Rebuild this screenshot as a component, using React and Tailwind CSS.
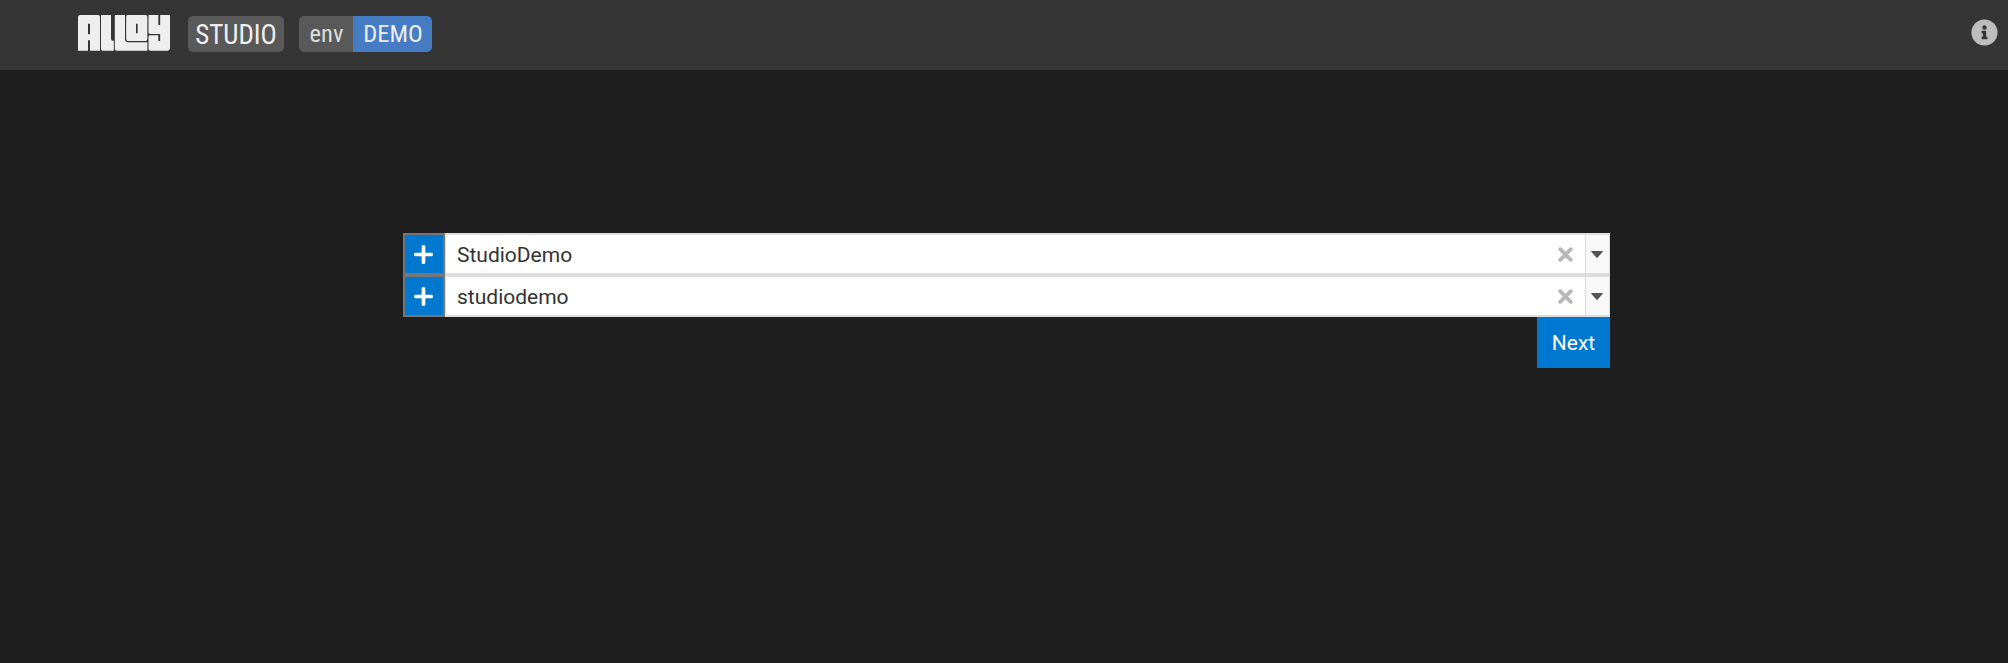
import React from "react";

function Logo() {
  return (
    <svg className="block h-9 w-[92px]" viewBox="54 45 276 108" role="img" aria-label="Alloy">
      <g fill="#eeeeee">
        <path fillRule="evenodd" d="M61 45H114Q120 45 120 51V152H90V121H84V152H54V53Q54 45 61 45ZM84 71V103H90V71Z" />
        <path d="M123 45H153V116Q153 122 158 122H161.5V152H128Q123 152 123 147Z" />
        <path d="M164.500 45H195V118Q195.500 127 204 127H262V152H170Q164.500 152 164.500 147Z" />
        <path fillRule="evenodd" d="M203 45H257Q262 45 262 50V117Q262 123 256 123H204Q198.500 123 198.500 117V50Q198.500 45 203 45ZM228 71V100H233V71Z" />
        <path d="M265.500 45H295V75H300.500V45H330V145Q330 152 323 152H271Q265.500 152 265.500 147V111Q265.500 106 270 106H295V123H300.500V102H270Q265.500 102 265.500 97Z" />
      </g>
    </svg>
  );
}

function Condensed({ children, className }) {
  return (
    <span className={`font-['Roboto_Condensed','Roboto',sans-serif] [font-stretch:75%] whitespace-nowrap ${className}`}>
      {children}
    </span>
  );
}

function SelectRow({ value }) {
  return (
    <div className="flex h-[42px]">
      <button className="flex w-[42px] items-center justify-center border-2 border-[#767676] bg-[#0078d0] pr-px" aria-label="Add">
        <svg className="size-[19px]" viewBox="0 0 19 19" fill="none" stroke="#fff" strokeWidth="3.7" strokeLinecap="round">
          <path d="M9.5 1.8V17.2M1.8 9.5H17.2" />
        </svg>
      </button>
      <div className="flex flex-1 items-stretch border-2 border-l border-r-[1px] border-[#dddddd] bg-white">
        <span className="flex flex-1 items-center pt-[3px] pl-[11px] font-['Roboto',sans-serif] text-[21px] text-[#333]">{value}</span>
        <button className="flex w-[39px] items-center justify-center" aria-label="Clear">
          <svg className="size-[15px]" viewBox="0 0 15 15" fill="none" stroke="#b8b8b8" strokeWidth="3.8" strokeLinecap="round">
            <path d="M2.2 2.2L12.8 12.8M12.8 2.2L2.2 12.8" />
          </svg>
        </button>
        <button className="flex w-6 items-center justify-center border-l border-[#dddddd] bg-[#f8f8f8] pr-px" aria-label="Open">
          <svg className="h-[7px] w-3" viewBox="0 0 12 7">
            <path d="M.5 0H11.5Q12 .3 11.7 .8L6.700 6.500Q6 7.100 5.300 6.500L.3 .8Q0 .3 .5 0Z" fill="#555" />
          </svg>
        </button>
      </div>
    </div>
  );
}

export default function App() {
  return (
    <div className="min-h-screen bg-[#1e1e1e]">
      <header className="flex h-[70px] items-start bg-[#353535] pr-[10px] pl-[78px]">
        <div className="mt-[15px]">
          <Logo />
        </div>
        <div className="mt-4 ml-[18px] flex h-9 w-24 items-center justify-center rounded-[5px] bg-[#595959] pt-0.5">
          <Condensed className="text-[27px] text-[#eeeeee]">STUDIO</Condensed>
        </div>
        <div className="mt-4 ml-[15px] flex h-9 overflow-hidden rounded-[5px]">
          <div className="flex w-[54px] items-center justify-center bg-[#595959] pl-px">
            <Condensed className="text-[24.5px] text-[#dddddd]">env</Condensed>
          </div>
          <div className="flex w-[79px] items-center justify-center bg-[#467cc4] pl-px">
            <Condensed className="text-[24.5px] text-[#eeeeee]">DEMO</Condensed>
          </div>
        </div>
        <svg className="mt-[19px] ml-auto size-[27px]" viewBox="0 0 512 512" role="img" aria-label="Information">
          <circle cx="256" cy="256" r="248" fill="#bdbdbd" />
          <path fill="#353535" d="M256 118a42 42 0 1 1 0 84a42 42 0 0 1 0-84ZM312 372a12 12 0 0 1-12 12H212a12 12 0 0 1-12-12V348a12 12 0 0 1 12-12H224V272H212a12 12 0 0 1-12-12V236a12 12 0 0 1 12-12H276a12 12 0 0 1 12 12V336H300a12 12 0 0 1 12 12Z" />
        </svg>
      </header>
      <main className="flex flex-col pt-[163px] pr-[398px] pl-[403px]">
        <SelectRow value="StudioDemo" />
        <SelectRow value="studiodemo" />
        <button className="flex h-[51px] w-[73px] items-center justify-center self-end bg-[#0078d0] pt-0.5 font-['Roboto',sans-serif] text-[21px] text-white">
          Next
        </button>
      </main>
    </div>
  );
}
